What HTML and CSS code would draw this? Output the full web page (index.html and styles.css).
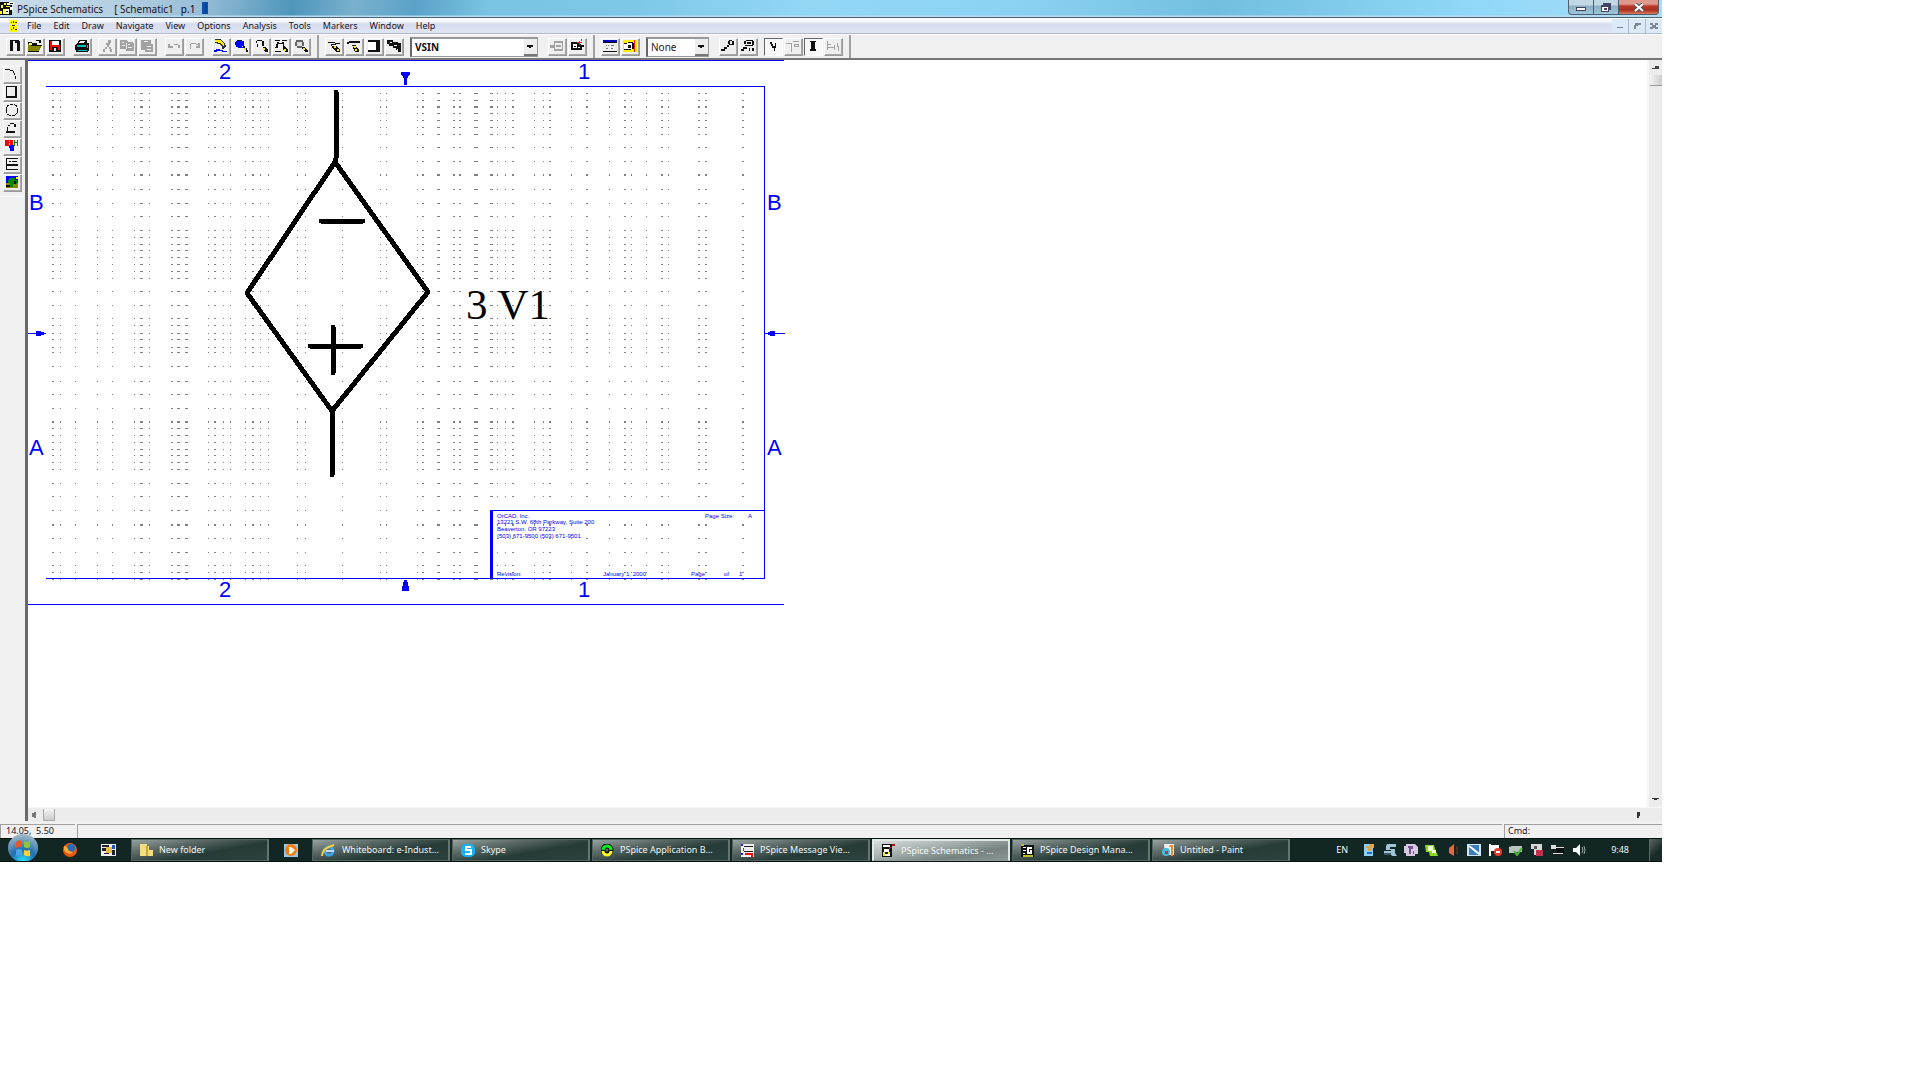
FILE: index.html
```html
<!DOCTYPE html>
<html lang="en">
<head>
<meta charset="utf-8">
<title>PSpice Schematics</title>
<link rel="stylesheet" href="styles.css">
</head>
<body>
<div class="app">
  <header class="titlebar">
    <svg class="app-icon" width="14" height="13" viewBox="0 0 14 13"><path d="M0 0h12v13H0z" fill="#111"/><path d="M1 3h2v3H1zM4 1h2v2H4zM6 4h4v1H6zM3 7h2v5H3zM0 9h2v3H0z" fill="#ff3"/><path d="M9 0h5v3H9zM10 5h3v3h-3zM5 7h4v5H5zM7 1h2v2H7z" fill="#ffe"/><path d="M6 9h2v1H6zM10 1h3v1h-3z" fill="#111"/></svg>
    <h1 class="title"><span>PSpice Schematics</span><span>[ Schematic1</span><span class="page-no">p.1</span><span class="caret">]</span></h1>
    <div class="window-buttons">
      <button class="win" aria-label="Minimize"><svg width="10" height="8" viewBox="0 0 10 8"><path d="M0 4h10v4H0z" fill="#445"/><path d="M1 5h8v2H1z" fill="#fff"/></svg></button>
      <button class="win" aria-label="Restore"><svg width="10" height="9" viewBox="0 0 10 9"><path d="M2 0h8v7h-2v2H0V2h2z" fill="#446"/><path d="M1 4h6v4H1z" fill="#fff"/><path d="M3 5h3v2H3z" fill="#446"/></svg></button>
      <button class="win close" aria-label="Close"><svg width="12" height="9" viewBox="0 0 12 9"><path d="M2 1l8 7M10 1l-8 7" stroke="#545468" stroke-width="4"/><path d="M2 1l8 7M10 1l-8 7" stroke="#fff" stroke-width="2"/></svg></button>
    </div>
  </header>

  <nav class="menubar">
    <svg class="menu-icon" width="9" height="12" viewBox="0 0 9 12"><path d="M0 0h8v4H6v1h3v7H1V5h1V4H0z" fill="#ff0"/><path d="M2 2h1v1H2zM4 1h1v2H4zM6 2h2v1H6zM3 5h3v1H3zM4 7h1v2H4zM2 9h1v1H2zM6 9h2v1H6z" fill="#333"/></svg>
    <button>File</button><button>Edit</button><button>Draw</button><button>Navigate</button><button>View</button><button>Options</button><button>Analysis</button><button>Tools</button><button>Markers</button><button>Window</button><button>Help</button>
    <div class="mdi-buttons">
      <button aria-label="Minimize document"><svg width="6" height="6" viewBox="0 0 6 6"><path d="M0 4h6v1H0z" fill="#7a8796"/></svg></button>
      <button aria-label="Restore document"><svg width="7" height="6" viewBox="0 0 7 6"><path d="M1 0h6v2H4v1H2v3H0V2h1z" fill="#7a8796"/></svg></button>
      <button aria-label="Close document"><svg width="8" height="6" viewBox="0 0 8 6"><path d="M0 0h8v6H0z" fill="#7a8796"/><path d="M3 0h2v2H3zM3 5h2v1H3zM0 2h2v2H0zM6 2h2v2H6z" fill="#dbe9f8"/></svg></button>
    </div>
  </nav>

  <div class="toolbar">
    <div class="group">
      <button class="tool" aria-label="New"><svg viewBox="0 0 16 14"><path d="M3 1h8l2 2v9h-3V4H8V2H6v10H3z"/></svg></button>
      <button class="tool" aria-label="Open"><svg viewBox="0 0 16 14"><path d="M1 3h4v1h5v2H1zM9 1h5v3h-2V2H9z"/><path d="M3 6h12l-3 6H1V5h2z" fill="#880"/><path d="M2 4h3v2H2z" fill="#ff6"/><path d="M4 6h11v1H4zM1 12h11v1H1z"/></svg></button>
      <button class="tool" aria-label="Save"><svg viewBox="0 0 16 14"><path d="M2 1h12v12H2z"/><path d="M4 2h8v4H4z" fill="#fff"/><path d="M3 2h2v9H3zM5 6h8v2H5zM11 7h2v4h-2z" fill="#f00"/><path d="M7 9h2v3H7z" fill="#ddd"/></svg></button>
    </div>
    <div class="group more"><button class="tool" aria-label="Print"><svg viewBox="0 0 16 14"><path d="M5 1h8v3h2v7l-2 2H2v-2H1V6l3-2z"/><path d="M6 2h5l-1 2H5z" fill="#fff"/><path d="M3 6h9v2H3zM4 11h9v1H4zM13 6h1v3h-1z" fill="#0bb"/></svg></button></div>
    <div class="group dim">
      <button class="tool" aria-label="Cut" disabled><svg viewBox="0 0 16 14"><path d="M9 1h3v3H9zM7 4h4v2H7zM8 6h2v2H8zM6 8h2v2H6zM4 10h2v3H4zM10 8h2v2h-2zM11 10h2v3h-2z"/></svg></button>
      <button class="tool" aria-label="Copy" disabled><svg viewBox="0 0 16 14"><path d="M1 1h6l2 2h4l2 2v7H7v-2H1z"/><path d="M3 3h2v1H3zM3 6h3v1H3zM9 5h2v1H9zM9 8h4v1H9zM7 4h1v6H7z" fill="#eee"/></svg></button>
      <button class="tool" aria-label="Paste" disabled><svg viewBox="0 0 16 14"><path d="M2 1h10v4h2v8H6v-2H2z"/><path d="M5 2h4v1H5zM8 7h4v1H8zM8 10h4v1H8z" fill="#eee"/></svg></button>
    </div>
    <div class="group dim more">
      <button class="tool" aria-label="Undo" disabled><svg viewBox="0 0 16 14"><path d="M2 5h2v2h3v2H2zM8 5h4v1H8zM12 6h2v3h-2z"/></svg></button>
      <button class="tool" aria-label="Redo" disabled><svg viewBox="0 0 16 14"><path d="M5 4h5v1H5zM4 5h1v5H4zM10 5h2V4h2v5h-4V7h2V6h-2z"/></svg></button>
    </div>
    <div class="group more">
      <button class="tool" aria-label="Redraw"><svg viewBox="0 0 16 14"><path d="M2 0h5l4 3 2 4-3 4-2-5-6-2z" fill="#333"/><path d="M2 1h5l4 4v3L8 4 2 3z" fill="#fe0"/><path d="M1 11h2v-1h3l2 1h2v1h4v1H9v-1H4v1H1z" fill="#00f"/></svg></button>
      <button class="tool" aria-label="Zoom in"><svg viewBox="0 0 16 14"><path d="M4 1h5v1h2v5H9v1h1v1H5V8H3V2h1z" fill="#00f"/><path d="M4 1h5v1H4zM2 3h1v3H2zM10 7h2v2h2v2h1v2h-2v-2h-2V9h-1z"/><path d="M11 9h2v2h-2z" fill="#dd4"/></svg></button>
      <button class="tool" aria-label="Zoom out"><svg viewBox="0 0 16 14"><path d="M4 1h5v1H4zM3 2h1v2H3zM9 2h2v5H9zM4 5h1v3H4zM10 8h2l3 3v2h-3l-2-3z"/><path d="M10 9h2v2h-2z" fill="#fe0"/></svg></button>
      <button class="tool" aria-label="Zoom area"><svg viewBox="0 0 16 14"><path d="M2 1h5v1H2zM9 1h5v1H9zM4 3h2v1h3V3h2v5h-1V5H5v3H3V5h1zM2 8h3v1H2zM2 12h6v1H2zM10 7h2l3 4v2h-3l-2-3z"/><path d="M11 10h2v2h-2z" fill="#fe0"/></svg></button>
      <button class="tool" aria-label="Zoom page"><svg viewBox="0 0 16 14"><path d="M3 1h7v2h1v4H9v2H4V7H2V3h1z" fill="#666"/><path d="M4 3h5v4H4z" fill="#ddd"/><path d="M9 8h2l4 4v1h-2L9 10z"/><path d="M10 9h2v2h-2z" fill="#fe0"/></svg></button>
    </div>
    <i class="sep"></i>
    <div class="group">
      <button class="tool" aria-label="Draw wire"><svg viewBox="0 0 16 14"><path d="M2 3h7v1H2zM9 4h5v1H9zM5 5h5v1H6v1h4l4 4v2h-4L6 8z"/><path d="M8 7h2v2H8zM11 10h2v2h-2z" fill="#fe0"/></svg></button>
      <button class="tool" aria-label="Draw bus"><svg viewBox="0 0 16 14"><path d="M3 2h11v2H3zM1 3h2v2H1zM6 6h4v1H7v1h3l3 3v2H9z"/><path d="M8 7h2v2H8zM9 10h2v2H9z" fill="#fe0"/></svg></button>
      <button class="tool" aria-label="Draw block"><svg viewBox="0 0 16 14"><path d="M2 1h12v12H2v-2h8V3H2z"/><path d="M2 3h8v8H2z" fill="#fff"/></svg></button>
      <button class="tool" aria-label="Get new part"><svg viewBox="0 0 16 14"><path d="M1 1h6v2h5v1h3v9h-3v-2h-2V9H7V7H3V5H1z"/><path d="M4 3h2v1H4zM8 6h3v1H8zM11 10h1v1h-1z" fill="#fff"/></svg></button>
    </div>
    <select class="combo part" aria-label="Part"><option>VSIN</option></select>
    <div class="group wide dim">
      <button class="tool" aria-label="Edit attributes" disabled><svg viewBox="0 0 16 14"><path d="M5 2h9v10H5V9H1V6h4z"/><path d="M6 4h7v6H6z" fill="#eee"/><path d="M7 6h5v2H7z"/></svg></button>
      <button class="tool" aria-label="Edit symbol"><svg viewBox="0 0 16 14"><path d="M2 3h8v2h2v1h3v2h-2v3H2z" fill="#111"/><path d="M4 5h4v4H4zM9 8h2v1H9z" fill="#fff"/><path d="M5 7h2v1H5z" fill="#111"/><path d="M12 0h1v2h-2v1h2v1h-2v2h-1V4H8V3h2V2h2z" fill="#e22"/></svg></button>
    </div>
    <i class="sep"></i>
    <div class="group">
      <button class="tool" aria-label="Setup analysis"><svg viewBox="0 0 16 14"><path d="M1 1h14v12H1z"/><path d="M1 4h14v8H1z" fill="#eee"/><path d="M1 1h14v2H1z" fill="#00b"/><path d="M4 6h1v1H4zM6 6h1v1H6zM9 6h3v1H9zM4 9h2v1H4zM9 9h2v1H9z" fill="#777"/></svg></button>
      <button class="tool" aria-label="Simulate"><svg viewBox="0 0 16 14"><path d="M1 1h14v12H1z" fill="#fe0"/><path d="M2 4h10v6H2z" fill="#fff"/><path d="M2 4h3v1H2zM6 3h5v1H6zM10 4h2v6h-2zM6 6h3v3H6zM2 10h7v1H2z"/><path d="M12 1h1v12h-1z" fill="#d22"/></svg></button>
    </div>
    <select class="combo color" aria-label="Marker color"><option>None</option></select>
    <div class="group wide">
      <button class="tool" aria-label="Voltage marker"><svg viewBox="0 0 16 14"><path d="M1 10h4v2H1zM4 8h3v2H4zM7 6h2v2H7zM9 1h3v1H9zM8 2h2v3H8zM12 2h2v4h-2zM9 5h4v1H9z"/></svg></button>
      <button class="tool" aria-label="Current marker"><svg viewBox="0 0 16 14"><path d="M6 1h7v1H6zM4 2h2v3H4zM12 2h2v4h-2zM7 3h4v2H7zM5 6h8v1H5zM3 8h4v2H3zM1 10h3v2H1zM9 9h1v3H9zM12 9h2v3h-2z"/></svg></button>
    </div>
    <div class="group">
      <button class="tool pressed" aria-label="Voltage display"><svg viewBox="0 0 16 14"><path d="M5 3h2v2h1v2h2V4h1v5h-1v3H9V9H7V7H6V5H5z"/></svg></button>
      <button class="tool off" aria-label="Voltage level"><svg viewBox="0 0 16 14"><path d="M1 4h6v1H1zM6 5h1v8H6zM8 2h6v1H8zM9 5h5v3H9z"/><path d="M10 6h3v1h-3z" fill="#eee"/></svg></button>
      <button class="tool pressed" aria-label="Current display"><svg viewBox="0 0 16 14"><path d="M5 2h6v1h-1v7h1v2H5v-2h1V3H5z"/></svg></button>
      <button class="tool off" aria-label="Current level"><svg viewBox="0 0 16 14"><path d="M2 2h1v9H2zM3 5h3v1H3zM3 8h7v1H3zM9 6h1v5H9zM12 4h1v3h1v5h-1V8h-1z"/></svg></button>
    </div>
    <i class="sep"></i>
  </div>

  <main class="workspace">
    <aside class="palette">
      <div class="palette-tools">
        <button class="tool" aria-label="Arc"><svg viewBox="0 0 16 14"><path d="M1 2h5v1H1zM6 3h3v1H6zM9 4h1v2H9zM10 6h1v2h-1zM11 9h1v3h-1z"/></svg></button>
        <button class="tool" aria-label="Box"><svg viewBox="0 0 16 14"><path d="M2 1h11v12H2z"/><path d="M3 2h8v9H3z" fill="#eee"/></svg></button>
        <button class="tool" aria-label="Circle"><svg viewBox="0 0 16 14"><circle cx="8" cy="7" r="6" fill="none" stroke="#111" stroke-dasharray="4 1"/></svg></button>
        <button class="tool" aria-label="Polyline"><svg viewBox="0 0 16 14"><path d="M6 2h4v1H6zM10 3h2v3h-2zM4 4h2v1H4zM3 6h1v5H3zM2 10h9v2H2z"/></svg></button>
        <button class="tool" aria-label="Text"><svg viewBox="0 0 16 14"><path d="M1 1h8v6H1z" fill="#f00"/><path d="M10 1h1v2h2V1h1v6h-1V4h-2v3h-1z" fill="#080"/><path d="M5 6h5v6H6v-3H5z" fill="#00f"/><path d="M5 2h1v1H5zM5 4h1v2H5z" fill="#fff"/></svg></button>
        <button class="tool" aria-label="Text box"><svg viewBox="0 0 16 14"><path d="M2 1h12v1H3v10h11v1H2zM5 4h2v1H5zM8 4h5v1H8zM3 7h11v2H3z"/></svg></button>
        <button class="tool" aria-label="Insert picture"><svg viewBox="0 0 16 14"><path d="M2 1h12v12H2z" fill="#00f"/><path d="M2 8h12v5H2z" fill="#880"/><path d="M5 3h6v2h2v4H9v3H6V8H4z" fill="#080"/><path d="M12 2h2v2h-2z" fill="#ff0"/><path d="M2 10h4v2H2zM10 6h2v3h-2z" fill="#111"/></svg></button>
      </div>
    </aside>
    <div class="document">
      <div class="sheet">
        <svg class="drawing" width="760" height="548" viewBox="28 60 760 548">
          <defs>
            <mask id="columns" maskUnits="userSpaceOnUse" x="28" y="60" width="760" height="548">
              <path fill="#fff" d="M52 60h2v548h-2zM60 60h1v548h-1zM75 60h1v548h-1zM97 60h1v548h-1zM112 60h1v548h-1zM134 60h1v548h-1zM140 60h3v548h-3zM149 60h1v548h-1zM171 60h2v548h-2zM177 60h3v548h-3zM185 60h3v548h-3zM208 60h1v548h-1zM214 60h2v548h-2zM223 60h1v548h-1zM230 60h1v548h-1zM245 60h1v548h-1zM252 60h2v548h-2zM260 60h1v548h-1zM268 60h1v548h-1zM297 60h1v548h-1zM305 60h1v548h-1zM342 60h1v548h-1zM380 60h1v548h-1zM386 60h1v548h-1zM417 60h1v548h-1zM422 60h2v548h-2zM437 60h3v548h-3zM453 60h2v548h-2zM459 60h2v548h-2zM474 60h4v548h-4zM490 60h3v548h-3zM497 60h1v548h-1zM505 60h1v548h-1zM512 60h2v548h-2zM534 60h1v548h-1zM543 60h1v548h-1zM549 60h2v548h-2zM571 60h1v548h-1zM586 60h2v548h-2zM609 60h1v548h-1zM624 60h2v548h-2zM631 60h1v548h-1zM646 60h1v548h-1zM661 60h2v548h-2zM668 60h1v548h-1zM698 60h2v548h-2zM705 60h2v548h-2zM742 60h2v548h-2z"/>
            </mask>
          </defs>
          <path mask="url(#columns)" fill="#808080" d="M28 93h740v1H28zM28 100h740v1H28zM28 106h740v2H28zM28 113h740v1H28zM28 120h740v1H28zM28 127h740v1H28zM28 134h740v1H28zM28 147h740v1H28zM28 161h740v1H28zM28 174h740v2H28zM28 189h740v1H28zM28 203h740v1H28zM28 216h740v1H28zM28 230h740v1H28zM28 237h740v1H28zM28 244h740v1H28zM28 250h740v1H28zM28 257h740v1H28zM28 264h740v1H28zM28 271h740v1H28zM28 278h740v1H28zM28 291h740v1H28zM28 305h740v1H28zM28 318h740v1H28zM28 325h740v1H28zM28 333h740v1H28zM28 339h740v1H28zM28 347h740v1H28zM28 352h740v1H28zM28 366h740v1H28zM28 381h740v1H28zM28 394h740v1H28zM28 408h740v1H28zM28 421h740v2H28zM28 428h740v1H28zM28 435h740v1H28zM28 442h740v1H28zM28 449h740v1H28zM28 455h740v1H28zM28 462h740v1H28zM28 469h740v1H28zM28 483h740v1H28zM28 496h740v1H28zM28 510h740v1H28zM28 524h740v2H28zM28 538h740v1H28zM28 552h740v1H28zM28 565h740v1H28zM28 572h740v1H28zM28 579h740v1H28z"/>
          <path fill="#00f" d="M28 60h756v1H28zM46 86h719v1H46zM764 86h1v493h-1zM46 578h719v1H46zM28 604h756v1H28zM490 510h275v1H490zM490 510h3v69h-3z"/>
          <path fill="#00f" d="M401 72h9v3h-1l-2 4v6h-3v-6l-2-4h-1zM404 580h3l2 8v3h-7v-3zM28 333h8v-2h5v1l5 1v1l-5 1v1h-5v-2h-8zM765 333l5-1v-1h5v2h10v1h-10v2h-5v-1l-5-1z"/>
          <g class="zones"><text x="219" y="79">2</text><text x="578" y="79">1</text><text x="219" y="597">2</text><text x="578" y="597">1</text><text x="29" y="210">B</text><text x="29" y="455">A</text><text x="767" y="210">B</text><text x="767" y="455">A</text></g>
          <g class="block-text">
            <text x="497" y="518">OrCAD, Inc.</text><text x="497" y="524">13221 S.W. 68th Parkway, Suite 200</text><text x="497" y="531">Beaverton, OR 97223</text><text x="497" y="538">(503) 671-9500 (503) 671-9501</text>
            <text x="705" y="518">Page Size:</text><text x="748" y="518">A</text>
            <text x="497" y="576">Revision:</text><text x="603" y="576">January 1, 2000</text><text x="691" y="576">Page</text><text x="724" y="576">of</text><text x="739" y="576">1</text>
          </g>
          <path class="symbol" d="M336 92V158L335 162L428 292L332 411L247 293L335 162M332 411V475M321 221H363M310 346H361M333 327V373"/>
          <text class="value" x="466" y="319">3 V1</text>
        </svg>
      </div>
      <div class="vscroll"><button aria-label="Scroll up"><svg width="7" height="4" viewBox="0 0 7 4"><path d="M3 0h4v2H7v1H0V2h3z" fill="#444"/></svg></button><span class="thumb-v"></span><button class="end" aria-label="Scroll down"><svg width="7" height="3" viewBox="0 0 7 3"><path d="M0 0h7v1H5v1H2V1H0z" fill="#333"/></svg></button></div>
      <div class="hscroll"><button aria-label="Scroll left"><svg width="4" height="6" viewBox="0 0 4 6"><path d="M2 0h2v6H2V5H0V1h2z" fill="#777"/></svg></button><span class="thumb-h"></span><button class="end" aria-label="Scroll right"><svg width="4" height="6" viewBox="0 0 4 6"><path d="M0 0h3v4H2v2H0z" fill="#333"/></svg></button></div>
    </div>
  </main>

  <div class="status"><span class="coords">14.05, &nbsp;5.50</span><span class="message"></span><span class="cmd">Cmd:</span></div>

  <footer class="taskbar">
    <button class="start" aria-label="Start"><svg width="32" height="28" viewBox="0 0 32 28"><defs><radialGradient id="orb" cx=".5" cy=".95" r=".9"><stop offset="0" stop-color="#2ce0ff"/><stop offset=".45" stop-color="#1f6fae"/><stop offset="1" stop-color="#9fb6c4"/></radialGradient></defs><ellipse cx="16" cy="15" rx="15" ry="14" fill="url(#orb)"/><path d="M9 9q3-3 6-1v6q-3-1-6 1z" fill="#e8562a"/><path d="M17 8q3 2 6 0v6q-3 2-6 0z" fill="#8cc63f"/><path d="M9 17q3-2 6 0v6q-3-2-6 0z" fill="#4aa3e8"/><path d="M17 17q3 1 6 0v6q-3 1-6-1z" fill="#ffd23c"/></svg></button>
    <button class="quick firefox" aria-label="Firefox"><svg width="16" height="14" viewBox="0 0 16 14"><circle cx="8" cy="7" r="7" fill="#e85a10"/><circle cx="9" cy="5" r="4" fill="#2a6ab8"/><path d="M2 3q3 0 4 3t5 3q-2 3-6 1T2 3z" fill="#fa3"/></svg></button>
    <button class="quick" aria-label="Media tool"><svg width="15" height="12" viewBox="0 0 15 12"><path d="M0 0h15v12H0z" fill="#eee"/><path d="M1 1h7v2H1zM1 4h4v3H1zM11 6h3v5h-3zM3 9h5v1H3z" fill="#223"/><path d="M5 3h6v6H5z" fill="#eb4"/><path d="M11 1h3v4h-3z" fill="#25b"/></svg></button>
    <button class="task folder"><svg width="13" height="12" viewBox="0 0 13 12"><path d="M0 0h7v2h2v4h4v6H0z" fill="#f3dd83"/><path d="M6 2h2v10H6z" fill="#c7a53c"/></svg><span>New folder</span></button>
    <button class="quick player" aria-label="Media player"><svg width="14" height="13" viewBox="0 0 14 13"><path d="M0 0h14v13H0z" fill="#9cc8e8"/><circle cx="7" cy="6" r="6" fill="#f08010"/><path d="M5 3h2l4 3-4 4H5z" fill="#fff"/></svg></button>
    <div class="tasks">
      <button class="task"><svg width="15" height="13" viewBox="0 0 15 13"><circle cx="8" cy="7" r="4" fill="none" stroke="#3ba4ea" stroke-width="3"/><path d="M5 6h8v2H5z" fill="#bdf"/><path d="M1 12Q1 4 13 1" fill="none" stroke="#fc3" stroke-width="2"/></svg><span>Whiteboard: e-Indust...</span></button>
      <button class="task"><svg width="14" height="13" viewBox="0 0 14 13"><rect width="14" height="13" rx="5" fill="#18b2f4"/><path d="M10 3H5v3h5v4H4" fill="none" stroke="#fff" stroke-width="2"/></svg><span>Skype</span></button>
      <button class="task"><svg width="13" height="13" viewBox="0 0 13 13"><circle cx="6" cy="6" r="4" fill="none" stroke="#111" stroke-width="5"/><path d="M2 6a4 4 0 0 1 8 0" fill="none" stroke="#0e2" stroke-width="3"/><path d="M10 7a4 4 0 0 1-8 0" fill="none" stroke="#ff2" stroke-width="3"/></svg><span>PSpice Application B...</span></button>
      <button class="task"><svg width="13" height="13" viewBox="0 0 13 13"><path d="M0 0h13v13H0z" fill="#eee"/><path d="M3 2h9v1H3zM3 7h9v1H3z" fill="#222"/><path d="M2 4h1v3H2zM4 9h8v4h-2v-2H4z" fill="#e11"/><path d="M0 0h2v2H0zM0 9h2v2H0z" fill="#22e"/></svg><span>PSpice Message Vie...</span></button>
      <button class="task active"><svg width="13" height="13" viewBox="0 0 13 13"><path d="M0 0h10v13H0z" fill="#111"/><path d="M1 1h7v2H1zM2 5h5v3H2zM2 10h6v2H2z" fill="#fff"/><path d="M1 8h2v4H1zM6 8h2v2H6z" fill="#ee2"/><path d="M10 0h3v2h-3v2H8v2H7V3h3z" fill="#b11"/></svg><span>PSpice Schematics - ...</span></button>
      <button class="task"><svg width="13" height="13" viewBox="0 0 13 13"><path d="M0 0h3v1h10v12H0z" fill="#111"/><path d="M0 0h3v2H0zM2 11h10v2H2z" fill="#bb2"/><path d="M2 3h3v1H2zM2 6h3v1H2zM2 9h2v1H2zM6 3h5v2H8v3h1V6h2v4H6z" fill="#fff"/></svg><span>PSpice Design Mana...</span></button>
      <button class="task"><svg width="13" height="13" viewBox="0 0 13 13"><path d="M3 0h10v11H4z" fill="#eee"/><circle cx="5" cy="8" r="4" fill="#4bd"/><path d="M9 1h3v11h-2V3H8z" fill="#e83"/><path d="M4 7h3v3H4z" fill="#c33"/></svg><span>Untitled - Paint</span></button>
    </div>
    <div class="tray">
      <span class="lang">EN</span>
      <div class="tray-icons">
        <svg viewBox="0 0 14 12"><path d="M2 0h9v12H2z" fill="#8cd0f4"/><path d="M7 0h5v4h-2v3H6V4H4V2h3z" fill="#e9a24a"/><path d="M5 8h5v2H5z" fill="#2573b8"/></svg>
        <svg viewBox="0 0 14 12"><path d="M4 0h9v3H7v2h5v4l2 3H9L7 9H1V7h7V6H3V2z" fill="#9dc6da"/><path d="M1 9h7v2H1z" fill="#456"/></svg>
        <svg viewBox="0 0 14 12"><path d="M2 0h9l3 3v7h-3v2H2V9H0V2h2z" fill="#d8c8e0"/><path d="M4 2h5v3H7v5H5V4H4zM9 7h1v3H9z" fill="#75528c"/></svg>
        <svg viewBox="0 0 14 12"><path d="M0 1h9l1 4 3 7H5L4 8H1z" fill="#8d2"/><path d="M3 2h5v4h3v3H7V7H3z" fill="#efc"/></svg>
        <svg viewBox="0 0 14 12"><path d="M8 0v12L3 9V4z" fill="#e8683e"/><path d="M11 2v8" stroke="#823622"/></svg>
        <svg viewBox="0 0 14 12"><path d="M0 0h14v12H0z" fill="#cfe4f5"/><path d="M2 1h10v10H2z" fill="#3b7ebc"/><path d="M2 2l4 3 6 5" stroke="#fff" stroke-width="2"/></svg>
        <svg viewBox="0 0 14 12"><path d="M1 0h2v1h8v6H3v5H1z" fill="#fff"/><circle cx="10" cy="8" r="4" fill="#e33b30"/><path d="M8 7h4v2H8z" fill="#fff"/></svg>
        <svg viewBox="0 0 14 12"><path d="M0 3l3-1h10v6H9L5 9H0z" fill="#b9c4c1"/><path d="M5 7l3 4 5-7" fill="none" stroke="#4b3" stroke-width="2"/></svg>
        <svg viewBox="0 0 14 12"><path d="M1 0h11v6H9v5H4V5H1z" fill="#d8d8d8"/><path d="M4 2h3v3H4z" fill="#555"/><path d="M6 6h7v6H6z" fill="#c0304c"/></svg>
        <svg viewBox="0 0 14 12"><path d="M0 1h5v4H0zM5 3h8v1H5zM2 9h10v1H2z" fill="#ddd"/><path d="M5 4h8v5H5zM2 5h1v4H2z" fill="#08110f"/></svg>
        <svg viewBox="0 0 14 12"><path d="M1 4h3l4-4v12L4 8H1z" fill="#fff"/><path d="M10 3l1 3-1 3M12 2l1 4-1 4" fill="none" stroke="#9aa"/></svg>
      </div>
      <span class="clock">9:48</span>
      <button class="desktop" aria-label="Show desktop"></button>
    </div>
  </footer>
</div>
</body>
</html>
```
FILE: styles.css
```css
* { box-sizing: border-box; }
body { margin: 0; background: #fff; color: #1c1428; font: 9px/12px "Noto Sans", "Open Sans", sans-serif; }
button { margin: 0; padding: 0; border: 0; background: none; color: inherit; font: inherit; display: flex; align-items: center; justify-content: center; flex: none; }
svg { display: block; flex: none; }
.app { display: flex; flex-direction: column; margin-right: 258px; background: #f0f0f0; }

/* Title bar */
.titlebar { display: flex; align-items: flex-start; height: 18px; border-bottom: 1px solid #4a6577; background: linear-gradient(180deg, transparent 15px, #b9dcf0 16px), linear-gradient(100deg, #c9dbe9 0, #b3cfe2 120px, #96bdd6 200px, #4f96bb 290px, #79b1ce 350px, #5aa2c8 410px, #78c4e2 480px, #7cc8e6 620px, #93d7f5 800px, #8bd2f2 1000px, #72bfe0 1200px, #8fd8f7 1450px, #a9dcf7 100%); }
.app-icon { margin-top: 2px; }
.title { display: flex; gap: 7px; flex: 1; margin: 2px 0 0 3px; font-size: 10px; line-height: 14px; font-weight: 400; }
.title span:nth-child(2) { margin-left: 4px; }
.page-no { color: #003; }
.title .caret { height: 12px; padding: 0 1px; line-height: 12px; background: #0b4fb0; color: #07357c; }
.window-buttons { display: flex; height: 15px; margin-right: 3px; border: 1px solid #4e6070; border-top: 0; border-radius: 0 0 4px 4px; background: #4e6070; gap: 1px; overflow: hidden; }
.win { width: 24px; background: linear-gradient(#c2d8e6 0 5px, #8baec4 6px, #9fc6dc); }
.close { width: 39px; background: linear-gradient(#dd9a8c 0 4px, #c0392a 6px, #a5301e 10px, #dd7a5c); }

/* Menu bar */
.menubar { display: flex; align-items: center; gap: 12px; height: 16px; padding-left: 9px; border-bottom: 1px solid #b0b8d0; background: linear-gradient(#f9fbfd 0 3px, #eef2f9 4px, #d5dcee 6px, #e0e5f4); }
.menu-icon { margin-right: -3px; }
.mdi-buttons { display: flex; gap: 1px; margin-left: auto; background: #a9b9ca; }
.mdi-buttons button { width: 16px; height: 14px; background: #dceaf8; }

/* Toolbar */
.toolbar { display: flex; align-items: center; gap: 6px; height: 26px; padding: 0 6px; border-top: 1px solid #fff; border-bottom: 2px solid #777; background: #f0f0f0; }
.group { display: flex; gap: 1px; }
.more { margin-left: 2px; }
.wide { margin-left: 4px; }
.tool { width: 19px; height: 18px; border: 1px solid; border-color: #fff #9a9a9a #9a9a9a #fff; box-shadow: inset -1px -1px #a8a8a8; background: #efefef; justify-content: flex-start; align-items: flex-start; }
.tool svg { width: 16px; height: 14px; fill: #111; shape-rendering: crispEdges; }
.dim .tool:disabled svg, .off svg { fill: #a2a2a2; }
.pressed { border-color: #666 #fff #fff #666; box-shadow: none; background: #f8f8f8; }
.sep { width: 2px; height: 23px; background: #a0a0a0; flex: none; }
.combo { appearance: none; height: 20px; padding: 0 0 0 3px; border: 1px solid #999; border-left: 2px solid #666; border-top: 2px solid #999; border-radius: 0; font: 10px/14px "Noto Sans", sans-serif; color: #301020; background: linear-gradient(#111, #111) right 4px top 6px / 6px 2px no-repeat, linear-gradient(#111, #111) right 6px top 8px / 2px 1px no-repeat, linear-gradient(#777, #777) right bottom / 13px 2px no-repeat, linear-gradient(#eee, #eee) right top / 13px 100% no-repeat, #fff; }
.part { width: 128px; font-weight: 700; color: #111; }
.color { width: 63px; }

/* Workspace */
.workspace { display: flex; }
.palette { width: 28px; border-right: 3px solid #696969; background: #f0f0f0; }
.palette-tools { display: flex; flex-direction: column; padding: 6px 0 4px 3px; border-bottom: 1px solid #fff; }
.document { flex: 1; display: grid; grid-template-columns: minmax(0, 1fr) 15px; grid-template-rows: auto 14px; }
.sheet { padding-bottom: 199px; background: #fff; }
.drawing { shape-rendering: crispEdges; }
.zones { fill: #00f; font: 22px "Liberation Sans", Arial, sans-serif; }
.block-text { fill: #00f; font: 6px "Liberation Sans", Arial, sans-serif; }
.symbol { fill: none; stroke: #000; stroke-width: 5px; stroke-linecap: round; stroke-linejoin: round; }
.value { fill: #000; font: 43px "Liberation Serif", "Times New Roman", serif; }
.vscroll { display: flex; flex-direction: column; align-items: center; border-left: 2px solid #f6f6f6; background: #ececec; }
.vscroll button { height: 15px; width: 9px; }
.thumb-v { width: 12px; height: 11px; border-bottom: 1px solid #999; background: linear-gradient(90deg, #f4f4f4, #ccc); }
.vscroll .end { margin-top: auto; }
.hscroll { display: flex; align-items: center; grid-column: 1 / -1; padding-right: 17px; border-top: 1px solid #f6f6f6; background: #ececec; }
.hscroll button { width: 12px; height: 13px; }
.hscroll .end { margin-left: auto; }
.thumb-h { width: 12px; height: 12px; margin-left: 3px; border: 1px solid #aaa; border-top: 0; background: linear-gradient(#f4f4f4, #ccc); }

/* Status bar */
.status { display: flex; gap: 2px; height: 17px; padding-top: 3px; background: #f0f0f0; }
.status span { border-top: 1px solid #a0a0a0; border-left: 1px solid #a0a0a0; white-space: nowrap; }
.coords { width: 75px; padding-left: 5px; }
.message { flex: 1; }
.cmd { width: 158px; padding-left: 3px; }

/* Taskbar */
.taskbar { display: flex; align-items: center; height: 24px; border-top: 1px solid #06120f; border-bottom: 1px solid #06120f; background: #122724; color: #f2f5f4; }
.start { width: 32px; height: 22px; margin-left: 7px; align-items: flex-end; }
.quick { width: 15px; }
.firefox { margin: 0 24px 0 23px; }
.player { margin: 0 14px; }
.task { width: 138px; height: 22px; padding: 0 2px 0 8px; gap: 6px; justify-content: flex-start; border: 1px solid #54645f; border-right: 2px solid #65746f; background: linear-gradient(170deg, #97a3a0 0, #5b6966 30%, #263b37 60%, #2c423e); white-space: nowrap; flex: 0 1 auto; overflow: hidden; }
.folder { margin-left: 15px; }
.tasks { display: flex; gap: 2px; min-width: 0; }
.active { border: 2px solid #dfe6e3; border-bottom: 1px solid #8d9995; background: linear-gradient(170deg, #d7dedc 0, #a2adab 40%, #75827f 70%, #8a9693); }
.tray { display: flex; align-items: center; align-self: stretch; margin-left: auto; flex: none; }
.lang { margin-right: 14px; }
.tray-icons { display: flex; gap: 7px; }
.tray-icons svg { width: 14px; height: 12px; }
.clock { margin: 0 20px 0 25px; }
.desktop { width: 13px; align-self: stretch; border-left: 1px solid #5b6966; background: linear-gradient(135deg, #596663, #182b28 60%); }
```
